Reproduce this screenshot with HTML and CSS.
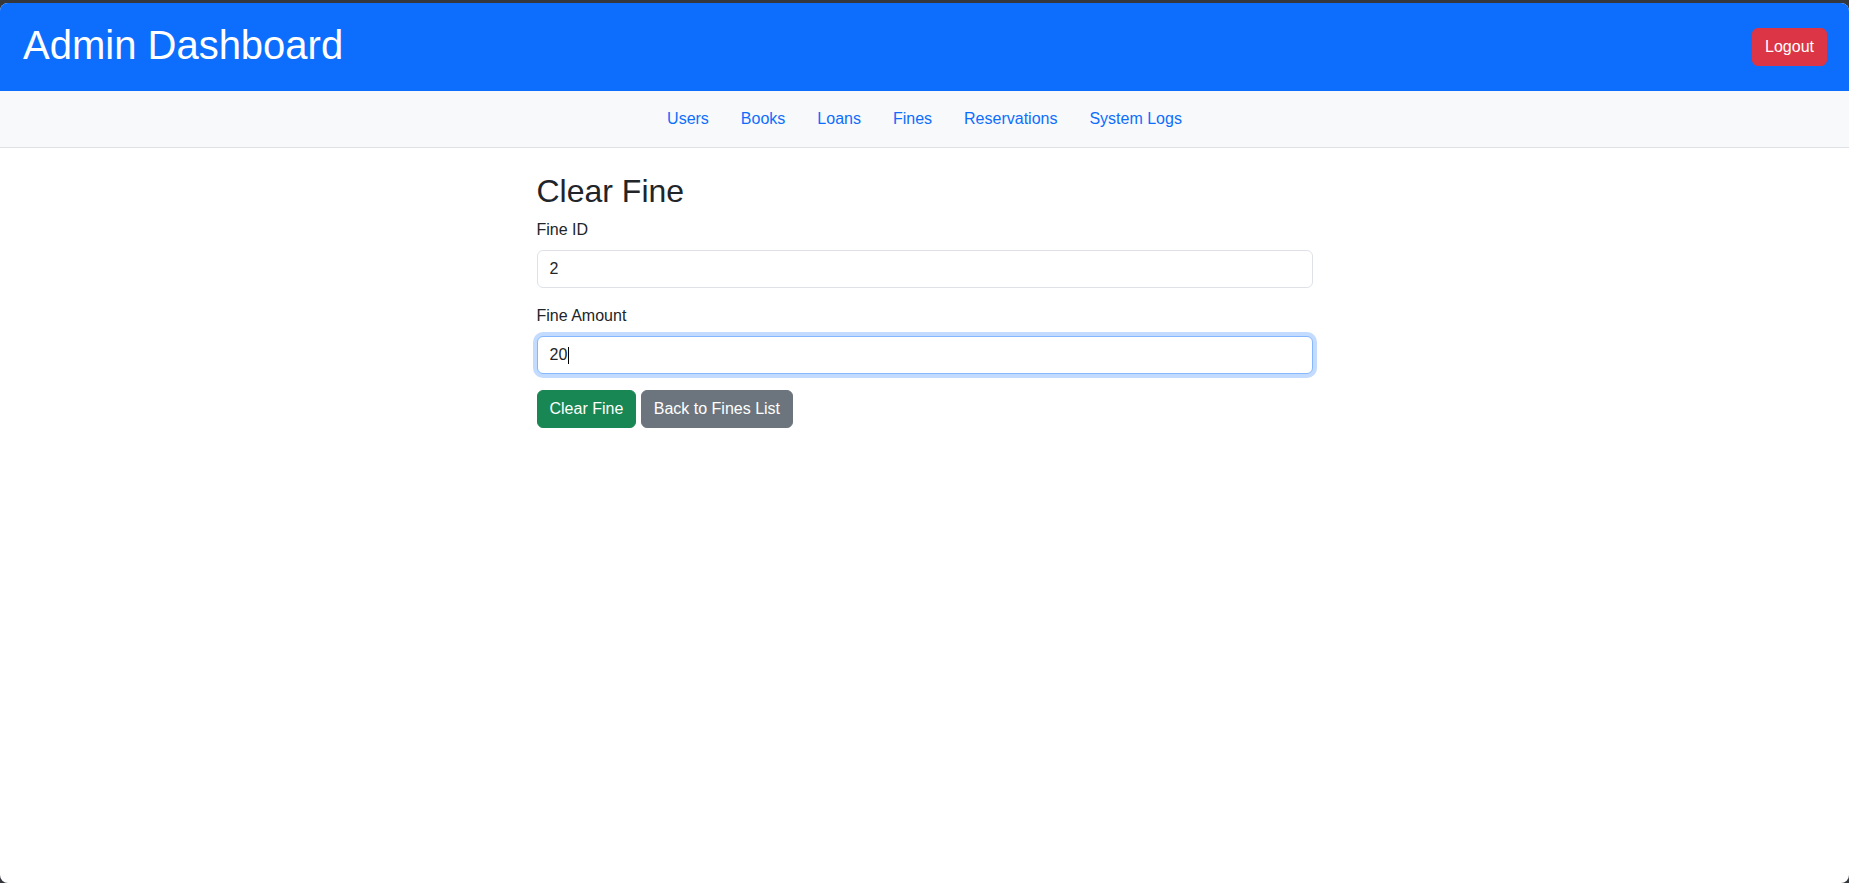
FILE: index.html
```html
<!DOCTYPE html>
<html lang="en">
<head>
<meta charset="utf-8">
<title>Admin Dashboard</title>
<link rel="stylesheet" href="styles.css">
</head>
<body>
<div class="window">
  <header class="topbar">
    <h1 class="brand">Admin Dashboard</h1>
    <button class="btn btn-danger logout" type="button">Logout</button>
  </header>
  <nav class="mainnav">
    <ul class="navlist">
      <li><a href="#">Users</a></li>
      <li><a href="#">Books</a></li>
      <li><a href="#">Loans</a></li>
      <li><a href="#">Fines</a></li>
      <li><a href="#">Reservations</a></li>
      <li><a href="#">System Logs</a></li>
    </ul>
  </nav>
  <main class="content">
    <h2 class="page-title">Clear Fine</h2>
    <form class="fine-form">
      <div class="field">
        <label class="form-label" for="fineId">Fine ID</label>
        <input class="form-control" id="fineId" type="text" value="2" readonly>
      </div>
      <div class="field">
        <label class="form-label" for="fineAmount">Fine Amount</label>
        <div class="input-wrap">
          <input class="form-control focused" id="fineAmount" type="text" value="20">
          <span class="caret"></span>
        </div>
      </div>
      <div class="actions">
        <button class="btn btn-success" type="button">Clear Fine</button>
        <a class="btn btn-secondary" href="#">Back to Fines List</a>
      </div>
    </form>
  </main>
</div>
</body>
</html>
```

FILE: styles.css
```css
* { box-sizing: border-box; }
html, body { height: 100%; }
body {
  margin: 0;
  background: #34383d;
  font-family: "Liberation Sans", Arial, sans-serif;
  font-size: 16px;
  line-height: 1.5;
  color: #212529;
}
.window {
  margin-top: 3px;
  height: calc(100% - 3px);
  background: #fff;
  border-radius: 8px;
  overflow: hidden;
}
.topbar {
  background: #0d6efd;
  color: #fff;
  display: flex;
  align-items: flex-start;
  justify-content: space-between;
  padding: 18px 22px 22px 23px;
}
.brand {
  margin: 0;
  font-size: 40px;
  font-weight: 400;
  line-height: 1.2;
}
.logout { margin-top: 7px; }
.btn {
  display: inline-block;
  font-family: inherit;
  font-size: 16px;
  line-height: 24px;
  padding: 6px 12px;
  border: 1px solid transparent;
  border-radius: 6px;
  color: #fff;
  text-decoration: none;
  cursor: pointer;
  vertical-align: middle;
}
.btn-danger { background: #dc3545; border-color: #dc3545; }
.btn-success { background: #198754; border-color: #198754; }
.btn-secondary { background: #6c757d; border-color: #6c757d; }
.mainnav {
  background: #f8f9fa;
  border-bottom: 1px solid #dee2e6;
  padding: 8px 0;
}
.navlist {
  list-style: none;
  margin: 0;
  padding: 0;
  display: flex;
  justify-content: center;
}
.navlist a {
  display: block;
  padding: 8px 16px;
  color: #0d6efd;
  text-decoration: none;
}
.content {
  width: 800px;
  margin: 24px auto 0;
  padding: 0 12px;
}
.page-title {
  margin: 0 0 8px;
  font-size: 32px;
  font-weight: 400;
  line-height: 1.2;
}
.field { margin-bottom: 16px; }
.form-label {
  display: inline-block;
  margin-bottom: 8px;
}
.form-control {
  display: block;
  width: 100%;
  height: 38px;
  padding: 6px 12px;
  font-family: inherit;
  font-size: 16px;
  line-height: 24px;
  color: #212529;
  background: #fff;
  border: 1px solid #dee2e6;
  border-radius: 6px;
  outline: none;
}
.form-control.focused {
  border-color: #86b7fe;
  box-shadow: 0 0 0 4px rgba(13, 110, 253, 0.25);
}
.input-wrap { position: relative; }
.caret {
  position: absolute;
  left: 31px;
  top: 11px;
  width: 1px;
  height: 17px;
  background: #000;
}
.actions { font-size: 16px; }
```
